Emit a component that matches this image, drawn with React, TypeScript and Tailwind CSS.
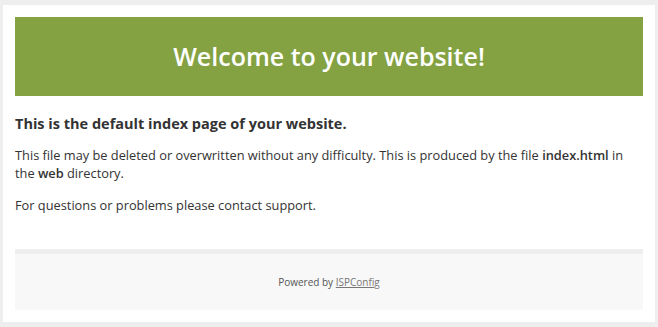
export default function App() {
  return (
    <div className="min-h-screen bg-[#eeeeee] pt-[5px] pl-[3px] pr-[3px]" style={{ fontFamily: "'Open Sans', 'DejaVu Sans', sans-serif" }}>
      <div className="w-[652px] h-[317px] bg-white p-3 flex flex-col text-[#333333]">
        {/* Header */}
        <div className="h-[79px] bg-[#84a242] flex items-center justify-center">
          <h1 className="text-[25px] font-semibold text-white leading-none">Welcome to your website!</h1>
        </div>

        <h2 className="mt-[18px] text-[14.5px] font-bold leading-[20px]">This is the default index page of your website.</h2>
        <p className="mt-3 text-[12.8px] leading-[18px]">
          This file may be deleted or overwritten without any difficulty. This is produced by the file <b className="font-semibold">index.html</b> in the <b className="font-semibold">web</b> directory.
        </p>
        <p className="mt-[14px] text-[12.8px] leading-[18px]">For questions or problems please contact support.</p>

        {/* Footer */}
        <div className="mt-auto h-[61px] border-t-[5px] border-[#eeeeee] bg-[#f8f8f8] flex items-center justify-center text-[10px] text-[#555555]">
          <span>
            Powered by <a href="#" className="underline text-[#777777]">ISPConfig</a>
          </span>
        </div>
      </div>
    </div>
  )
}
